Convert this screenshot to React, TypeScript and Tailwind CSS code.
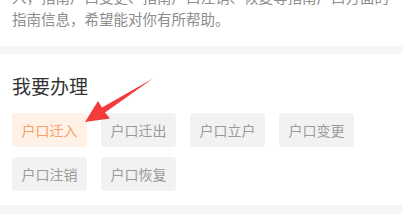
import React from "react";

const items = ["户口迁入", "户口迁出", "户口立户", "户口变更", "户口注销", "户口恢复"];

export default function App() {
  return (
    <div
      className="relative w-[402px] h-[222px] overflow-hidden bg-white"
      style={{ fontFamily: '"Noto Sans CJK SC", "Noto Sans", sans-serif' }}
    >
      <div className="px-[12px] pb-[16px] bg-white">
        <div className="-mt-[14px] text-[14.5px] leading-[22px] text-[#8c8c8c]">
          <div className="whitespace-nowrap">入，指南户口变更、指南户口注销、恢复等指南户口方面的</div>
          <div className="whitespace-nowrap">指南信息，希望能对你有所帮助。</div>
        </div>
      </div>
      <div className="h-[8px] bg-[#f5f5f5]" />
      <div className="bg-white px-[12px] pt-[19px] pb-[14px]">
        <div className="text-[19px] leading-[26px] text-[#333333]">我要办理</div>
        <div className="mt-[14px] flex flex-wrap gap-x-[14px] gap-y-[10px]">
          {items.map((t, i) => (
            <div
              key={t}
              className={
                i === 0
                  ? "w-[75px] h-[34px] flex items-center justify-center rounded-[4px] bg-[#fff1e6] text-[#f7a067] text-[14px]"
                  : "w-[75px] h-[34px] flex items-center justify-center rounded-[4px] bg-[#f2f2f2] text-[#9a9a9a] text-[14px]"
              }
            >
              {t}
            </div>
          ))}
        </div>
      </div>
      <div className="h-[9px] bg-[#f5f5f5]" />
      <svg
        className="absolute left-0 top-0 pointer-events-none"
        width="402"
        height="222"
        viewBox="0 0 402 222"
      >
        <polygon
          points="85,122 98,101 102,107.5 153,78.5 105,112.5 110,118.5"
          fill="#f33b3b"
        />
      </svg>
    </div>
  );
}
